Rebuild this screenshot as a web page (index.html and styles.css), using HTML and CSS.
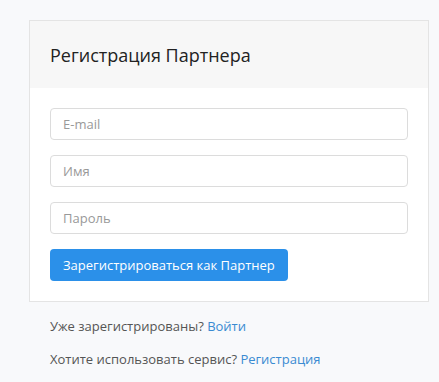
FILE: index.html
```html
<!DOCTYPE html>
<html lang="ru">
<head>
  <meta charset="UTF-8">
  <title>Регистрация Партнера</title>
  <link rel="stylesheet" href="styles.css">
</head>
<body>
  <div class="wrap">
    <div class="card">
      <div class="cardHead">
        <h1 class="title">Регистрация Партнера</h1>
      </div>
      <form class="cardBody">
        <input class="field" type="email" placeholder="E-mail">
        <input class="field" type="text" placeholder="Имя">
        <input class="field" type="password" placeholder="Пароль">
        <button class="btn" type="button">Зарегистрироваться как Партнер</button>
      </form>
    </div>

    <p class="note">Уже зарегистрированы? <a href="#">Войти</a></p>
    <p class="note">Хотите использовать сервис? <a href="#">Регистрация</a></p>
  </div>
</body>
</html>
```

FILE: styles.css
```css
* {
  padding: 0;
  margin: 0;
  box-sizing: border-box;
}

body {
  background-color: #f8f9fb;
  font-family: "Open Sans", "Noto Sans", sans-serif;
  color: #333;
}

.wrap {
  padding-top: 20px;
  padding-left: 29px;
  width: 429px;
}

.card {
  background-color: #fff;
  border: 1px solid #e4e4e4;
}

.cardHead {
  background-color: #f7f7f7;
  height: 67px;
  padding-left: 20px;
  display: flex;
  align-items: center;
}

.title {
  font-size: 18px;
  font-weight: 400;
  color: #222;
}

.cardBody {
  padding: 20px;
  display: flex;
  flex-direction: column;
  align-items: flex-start;
  gap: 15px;
}

.field {
  width: 100%;
  height: 32px;
  border: 1px solid #dcdcdc;
  border-radius: 4px;
  padding: 0 12px;
  font-family: inherit;
  font-size: 13px;
  color: #333;
  background-color: #fff;
}

.field::placeholder {
  color: #999;
}

.btn {
  height: 32px;
  padding: 0 13px;
  border: none;
  border-radius: 4px;
  background-color: #2b90e9;
  color: #fff;
  font-family: inherit;
  font-size: 13px;
  cursor: pointer;
}

.note {
  font-size: 13px;
  color: #555;
  padding-left: 21px;
  margin-top: 15px;
  line-height: 18px;
}

.note + .note {
  margin-top: 15px;
}

.note a {
  color: #3a8bd2;
  text-decoration: none;
}
```
